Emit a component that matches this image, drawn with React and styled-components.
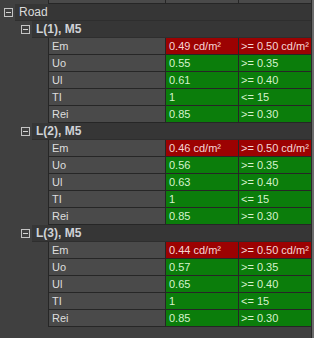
import React from "react";
import styled, { createGlobalStyle } from "styled-components";

const GlobalStyle = createGlobalStyle`
  html, body { margin: 0; padding: 0; }
  body {
    background: #404040;
    font-family: "Liberation Sans", Arial, sans-serif;
    font-size: 11px;
    color: #e0e0e0;
  }
`;

const Frame = styled.div`
  display: flex;
  width: 314px;
  height: 338px;
  overflow: hidden;
  background: #404040;
`;

const Grid = styled.div`
  flex: 1;
  display: flex;
  flex-direction: column;
`;

const Edge = styled.div`
  width: 2px;
  border-left: 1px solid #2a2a2a;
  background: #6a6a6a;
`;

const CellsRow = styled.div`
  display: grid;
  grid-template-columns: 117px 73px 73px;
  margin-left: 48px;
  height: ${(p) => p.$h || 17}px;
`;

const Cell = styled.div`
  border-left: 1px solid #262626;
  border-bottom: 1px solid #262626;
  padding-left: ${(p) => p.$pad || 3}px;
  line-height: 16px;
  white-space: nowrap;
  overflow: hidden;
  background: ${(p) =>
    p.$status === "fail" ? "#9c0202" : p.$status === "ok" ? "#0b7d0b" : "#4a4a4a"};
  color: ${(p) =>
    p.$status === "fail" ? "#f6d6d6" : p.$status === "ok" ? "#d6f2cc" : "#dedede"};
`;

const HeaderRow = styled.div`
  display: flex;
  height: 17px;
`;

const Toggle = styled.div`
  width: ${(p) => p.$indent}px;
  flex: none;
  display: flex;
  align-items: center;
  padding-left: ${(p) => p.$indent - 11}px;
  box-sizing: border-box;
`;

const Band = styled.div`
  flex: 1;
  background: #363636;
  border-bottom: 1px solid #2e2e2e;
  padding-left: 4px;
  font-size: 12px;
  line-height: 16px;
  font-weight: ${(p) => (p.$bold ? 700 : 400)};
  color: ${(p) => (p.$bold ? "#cfd2d6" : "#dadada")};
  white-space: nowrap;
`;

const MinusBox = () => (
  <svg width="9" height="9" viewBox="0 0 9 9">
    <rect x="0.5" y="0.5" width="8" height="8" fill="none" stroke="#c4c4c4" strokeWidth="1" />
    <rect x="2" y="4" width="5" height="1" fill="#d4d4d4" />
  </svg>
);

const Header = ({ indent, bold, children }) => (
  <HeaderRow>
    <Toggle $indent={indent}>
      <MinusBox />
    </Toggle>
    <Band $bold={bold}>{children}</Band>
  </HeaderRow>
);

const groups = [
  { name: "L(1), M5", em: "0.49", uo: "0.55", ul: "0.61", tl: "1", rei: "0.85" },
  { name: "L(2), M5", em: "0.46", uo: "0.56", ul: "0.63", tl: "1", rei: "0.85" },
  { name: "L(3), M5", em: "0.44", uo: "0.57", ul: "0.65", tl: "1", rei: "0.85" },
];

const rowsFor = (g) => [
  { label: "Em", value: `${g.em} cd/m²`, crit: ">= 0.50 cd/m²", status: "fail" },
  { label: "Uo", value: g.uo, crit: ">= 0.35", status: "ok" },
  { label: "Ul", value: g.ul, crit: ">= 0.40", status: "ok" },
  { label: "TI", value: g.tl, crit: "<= 15", status: "ok" },
  { label: "Rei", value: g.rei, crit: ">= 0.30", status: "ok" },
];

export default function App() {
  return (
    <>
      <GlobalStyle />
      <Frame>
        <Grid>
          <CellsRow $h={4}>
            <Cell />
            <Cell />
            <Cell />
          </CellsRow>
          <Header indent={15}>Road</Header>
          {groups.map((g) => (
            <React.Fragment key={g.name}>
              <Header indent={32} bold>
                {g.name}
              </Header>
              {rowsFor(g).map((r) => (
                <CellsRow key={r.label}>
                  <Cell>{r.label}</Cell>
                  <Cell $status={r.status}>{r.value}</Cell>
                  <Cell $status={r.status} $pad={2}>
                    {r.crit}
                  </Cell>
                </CellsRow>
              ))}
            </React.Fragment>
          ))}
        </Grid>
        <Edge />
      </Frame>
    </>
  );
}
